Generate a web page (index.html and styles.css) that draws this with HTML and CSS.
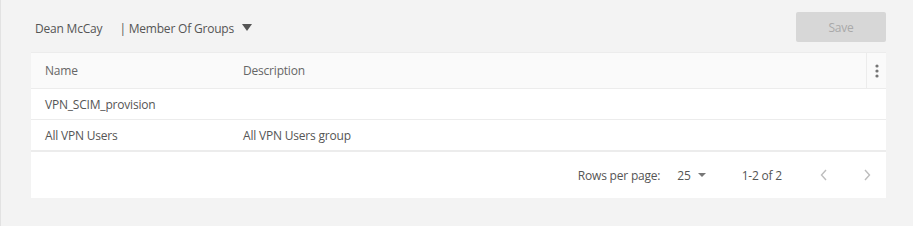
FILE: index.html
```html
<!DOCTYPE html>
<html>
<head>
<meta charset="utf-8">
<link rel="stylesheet" href="styles.css">
</head>
<body>
<div class="page">
  <div class="topbar">
    <div class="crumbs">
      <span class="user">Dean McCay</span>
      <span class="group">| Member Of Groups</span>
      <span class="caret"></span>
    </div>
    <button class="save">Save</button>
  </div>
  <div class="card">
    <div class="row head">
      <div class="c name">Name</div>
      <div class="c desc">Description</div>
      <div class="c menu">
        <svg width="4" height="14" viewBox="0 0 4 14"><circle cx="2" cy="2" r="1.6" fill="#757575"/><circle cx="2" cy="7" r="1.6" fill="#757575"/><circle cx="2" cy="12" r="1.6" fill="#757575"/></svg>
      </div>
    </div>
    <div class="row">
      <div class="c name">VPN_SCIM_provision</div>
      <div class="c desc"></div>
    </div>
    <div class="row last">
      <div class="c name">All VPN Users</div>
      <div class="c desc">All VPN Users group</div>
    </div>
    <div class="footer">
      <span class="rpp">Rows per page:</span>
      <span class="count">25</span>
      <span class="mini-caret"></span>
      <span class="range">1-2 of 2</span>
      <svg class="nav prev" width="8" height="12" viewBox="0 0 8 12"><path d="M6 1 L1.5 6 L6 11" fill="none" stroke="#bdbdbd" stroke-width="1.4"/></svg>
      <svg class="nav next" width="8" height="12" viewBox="0 0 8 12"><path d="M2 1 L6.5 6 L2 11" fill="none" stroke="#bdbdbd" stroke-width="1.4"/></svg>
    </div>
  </div>
</div>
</body>
</html>
```
FILE: styles.css
```css
html, body {
  margin: 0;
  padding: 0;
}
body {
  background: #f3f3f3;
  font-family: "Open Sans", "Noto Sans", sans-serif;
  font-size: 12px;
  letter-spacing: -0.2px;
  color: #555;
  width: 913px;
  height: 226px;
  overflow: hidden;
}
.page {
  border-left: 1px solid #e2e2e2;
  height: 226px;
  box-sizing: border-box;
  padding: 12px 27px 0 30px;
}
.topbar {
  display: flex;
  align-items: center;
  justify-content: space-between;
  height: 30px;
}
.crumbs {
  display: flex;
  align-items: center;
  padding-left: 4px;
  margin-top: 2px;
}
.user {
  color: #555;
}
.group {
  margin-left: 17px;
  color: #555;
}
.caret {
  width: 0;
  height: 0;
  border-left: 5px solid transparent;
  border-right: 5px solid transparent;
  border-top: 7px solid #555;
  margin-left: 8px;
  margin-top: -2px;
}
.save {
  width: 90px;
  height: 30px;
  background: #d7d7d7;
  border: none;
  border-radius: 2px;
  color: #a9a9a9;
  font-family: inherit;
  font-size: 12px;
  letter-spacing: -0.2px;
  padding: 0;
}
.card {
  margin-top: 10px;
  background: #fff;
  border-top: 1px solid #ececec;
}
.row {
  display: flex;
  height: 30px;
  align-items: center;
  border-bottom: 1px solid #ececec;
}
.row.head {
  height: 35px;
  background: #fafafa;
  align-items: stretch;
}
.row.head .c {
  display: flex;
  align-items: center;
  color: #666;
}
.row.last {
  border-bottom: 2px solid #ececec;
}
.c.name {
  width: 198px;
  padding-left: 14px;
}
.c.desc {
  flex: 1;
}
.c.menu {
  width: 19px;
  border-left: 1px solid #ececec;
  justify-content: center;
}
.footer {
  display: flex;
  align-items: center;
  justify-content: flex-end;
  height: 46px;
  color: #555;
  padding-right: 15px;
}
.count {
  margin-left: 17px;
}
.mini-caret {
  width: 0;
  height: 0;
  border-left: 4px solid transparent;
  border-right: 4px solid transparent;
  border-top: 4px solid #777;
  margin-left: 7px;
}
.range {
  margin-left: 36px;
}
.nav.prev {
  margin-left: 38px;
}
.nav.next {
  margin-left: 35px;
}
```
